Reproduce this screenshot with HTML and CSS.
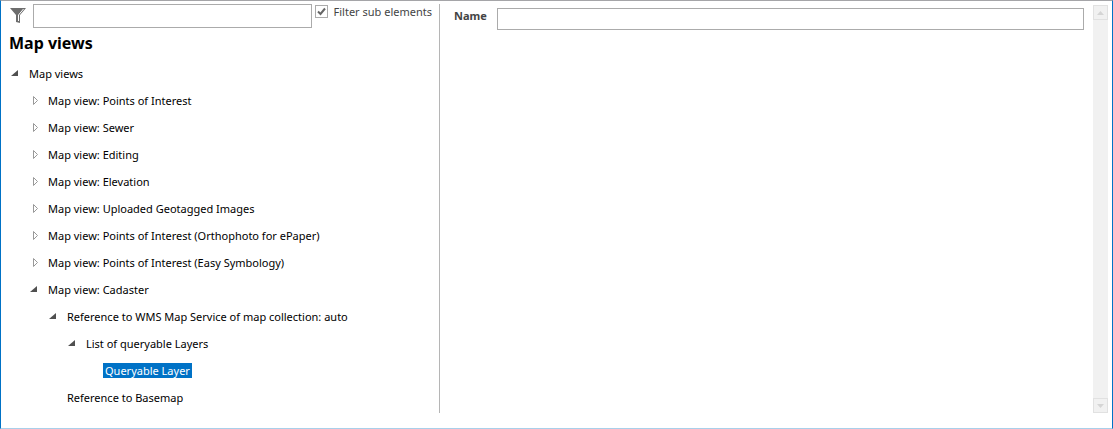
FILE: index.html
```html
<!DOCTYPE html>
<html lang="en">
<head>
  <meta charset="UTF-8">
  <meta name="viewport" content="width=device-width, initial-scale=1.0">
  <title>Map views</title>
  <link rel="stylesheet" href="styles.css">
</head>
<body>
  <div class="window">
    <section class="tree-panel">
      <div class="filter-bar">
        <svg class="filter-icon" viewBox="0 0 16 16" aria-hidden="true">
          <path d="M0 0H16L10 7V15L6 14V7Z" fill="#6d6d6d"/>
          <path d="M13.500 1L8.500 7V13" fill="none" stroke="#fff"/>
        </svg>
        <input type="text" class="filter-input" aria-label="Filter">
        <label class="filter-option">
          <input type="checkbox" checked>
          Filter sub elements
        </label>
      </div>
      <h1>Map views</h1>
      <ul class="tree" id="tree"></ul>
    </section>

    <main class="detail-panel">
      <label for="name">Name</label>
      <input type="text" id="name">
    </main>

    <div class="scrollbar">
      <button type="button" aria-label="Scroll up">
        <svg viewBox="0 0 7 4"><path d="M0 4L3.500 0L7 4Z"/></svg>
      </button>
      <button type="button" aria-label="Scroll down">
        <svg viewBox="0 0 7 4"><path d="M0 0L3.500 4L7 0Z"/></svg>
      </button>
    </div>
  </div>

  <script src="tree.js"></script>
</body>
</html>
```
FILE: styles.css
```css
* {
  margin: 0;
  padding: 0;
  box-sizing: border-box;
}

body {
  background-color: #fff;
  color: #000;
  font-family: "Noto Sans", "Open Sans", sans-serif;
  font-size: 11px;
}

input {
  font: inherit;
}

.window {
  display: grid;
  grid-template-columns: 436px 1fr 15px;
  min-height: 100vh;
  padding: 3px 4px 15px 3px;
  border: 1px solid #0072c6;
  border-top-color: #a5a5a8;
  border-bottom-color: #a9cfea;
}

/* Tree */
.tree-panel {
  border-right: 1px solid #b5b5b5;
}

.filter-bar {
  display: flex;
  align-items: flex-start;
}

.filter-icon {
  width: 16px;
  height: 16px;
  margin: 4px 7px 0 6px;
}

.filter-input,
.detail-panel input {
  padding: 0 4px;
  border: 1px solid #ababab;
}

.filter-input {
  flex: 1;
  height: 24px;
}

.filter-option {
  display: flex;
  gap: 6px;
  margin: 0 7px 0 3px;
  color: #444;
  line-height: 16px;
}

.filter-option input {
  appearance: none;
  width: 13px;
  height: 13px;
  margin-top: 1px;
  border: 1px solid #ababab;
}

.filter-option input:checked {
  background: url("data:image/svg+xml,%3Csvg xmlns='http://www.w3.org/2000/svg' viewBox='0 0 11 11'%3E%3Cpath d='M2 5.500L4.500 8L9 2.500' fill='none' stroke='%23666' stroke-width='2'/%3E%3C/svg%3E");
}

h1 {
  padding: 3px 5px 5px;
  font-size: 16px;
  line-height: 24px;
}

.tree,
.tree ul {
  list-style: none;
}

.tree ul {
  padding-left: 19px;
}

.tree-row {
  display: flex;
  align-items: center;
  height: 27px;
  padding-left: 7px;
}

.toggle,
.toggle-space {
  width: 16px;
  height: 15px;
}

.toggle {
  display: flex;
  align-items: center;
  border: 0;
  background: none;
}

.toggle svg {
  width: 8px;
  height: 9px;
}

.tree-label {
  padding: 0 2px;
  line-height: 15px;
}

.tree-label.selected {
  background-color: #0072c6;
  color: #fff;
}

/* Details */
.detail-panel {
  display: flex;
  align-items: flex-start;
  gap: 10px;
  padding: 4px 9px 0 14px;
}

.detail-panel label {
  color: #444;
  font-weight: bold;
  line-height: 15px;
}

.detail-panel input {
  flex: 1;
  height: 22px;
}

.scrollbar {
  display: flex;
  flex-direction: column;
  justify-content: space-between;
  margin-top: 1px;
  background-color: #f1f1f1;
}

.scrollbar button {
  display: flex;
  align-items: center;
  justify-content: center;
  height: 15px;
  border: 1px solid #e1e1e1;
  background-color: #f1f1f1;
}

.scrollbar svg {
  width: 7px;
  height: 4px;
  fill: #d5d5d5;
}
```
FILE: tree.js
```js
const treeData = [
  { label: "Map views", children: [
    { label: "Map view: Points of Interest", closed: true },
    { label: "Map view: Sewer", closed: true },
    { label: "Map view: Editing", closed: true },
    { label: "Map view: Elevation", closed: true },
    { label: "Map view: Uploaded Geotagged Images", closed: true },
    { label: "Map view: Points of Interest (Orthophoto for ePaper)", closed: true },
    { label: "Map view: Points of Interest (Easy Symbology)", closed: true },
    { label: "Map view: Cadaster", children: [
      { label: "Reference to WMS Map Service of map collection: auto", children: [
        { label: "List of queryable Layers", children: [
          { label: "Queryable Layer", selected: true }
        ] }
      ] },
      { label: "Reference to Basemap" }
    ] }
  ] }
];

const openArrow = '<svg viewBox="0 0 8 9"><path d="M7 1V7H0Z" fill="#505050"/></svg>';
const closedArrow = '<svg viewBox="0 0 8 9"><path d="M3.500 .5V8.500L7.500 4.500Z" fill="#fff" stroke="#999"/></svg>';

function toggleMarkup(node) {
  if (!node.children && !node.closed) return '<span class="toggle-space"></span>';
  return `<button type="button" class="toggle" aria-label="Toggle ${node.label}">${node.closed ? closedArrow : openArrow}</button>`;
}

function renderNodes(nodes) {
  return nodes.map(node => `
    <li>
      <div class="tree-row">
        ${toggleMarkup(node)}
        <span class="tree-label${node.selected ? ' selected' : ''}">${node.label}</span>
      </div>
      ${node.children ? `<ul>${renderNodes(node.children)}</ul>` : ''}
    </li>`).join('');
}

document.getElementById('tree').innerHTML = renderNodes(treeData);

// Collapse and expand branches
document.getElementById('tree').addEventListener('click', event => {
  const button = event.target.closest('.toggle');
  const list = button && button.closest('li').querySelector('ul');
  if (!list) return;
  list.hidden = !list.hidden;
  button.innerHTML = list.hidden ? closedArrow : openArrow;
});
```
